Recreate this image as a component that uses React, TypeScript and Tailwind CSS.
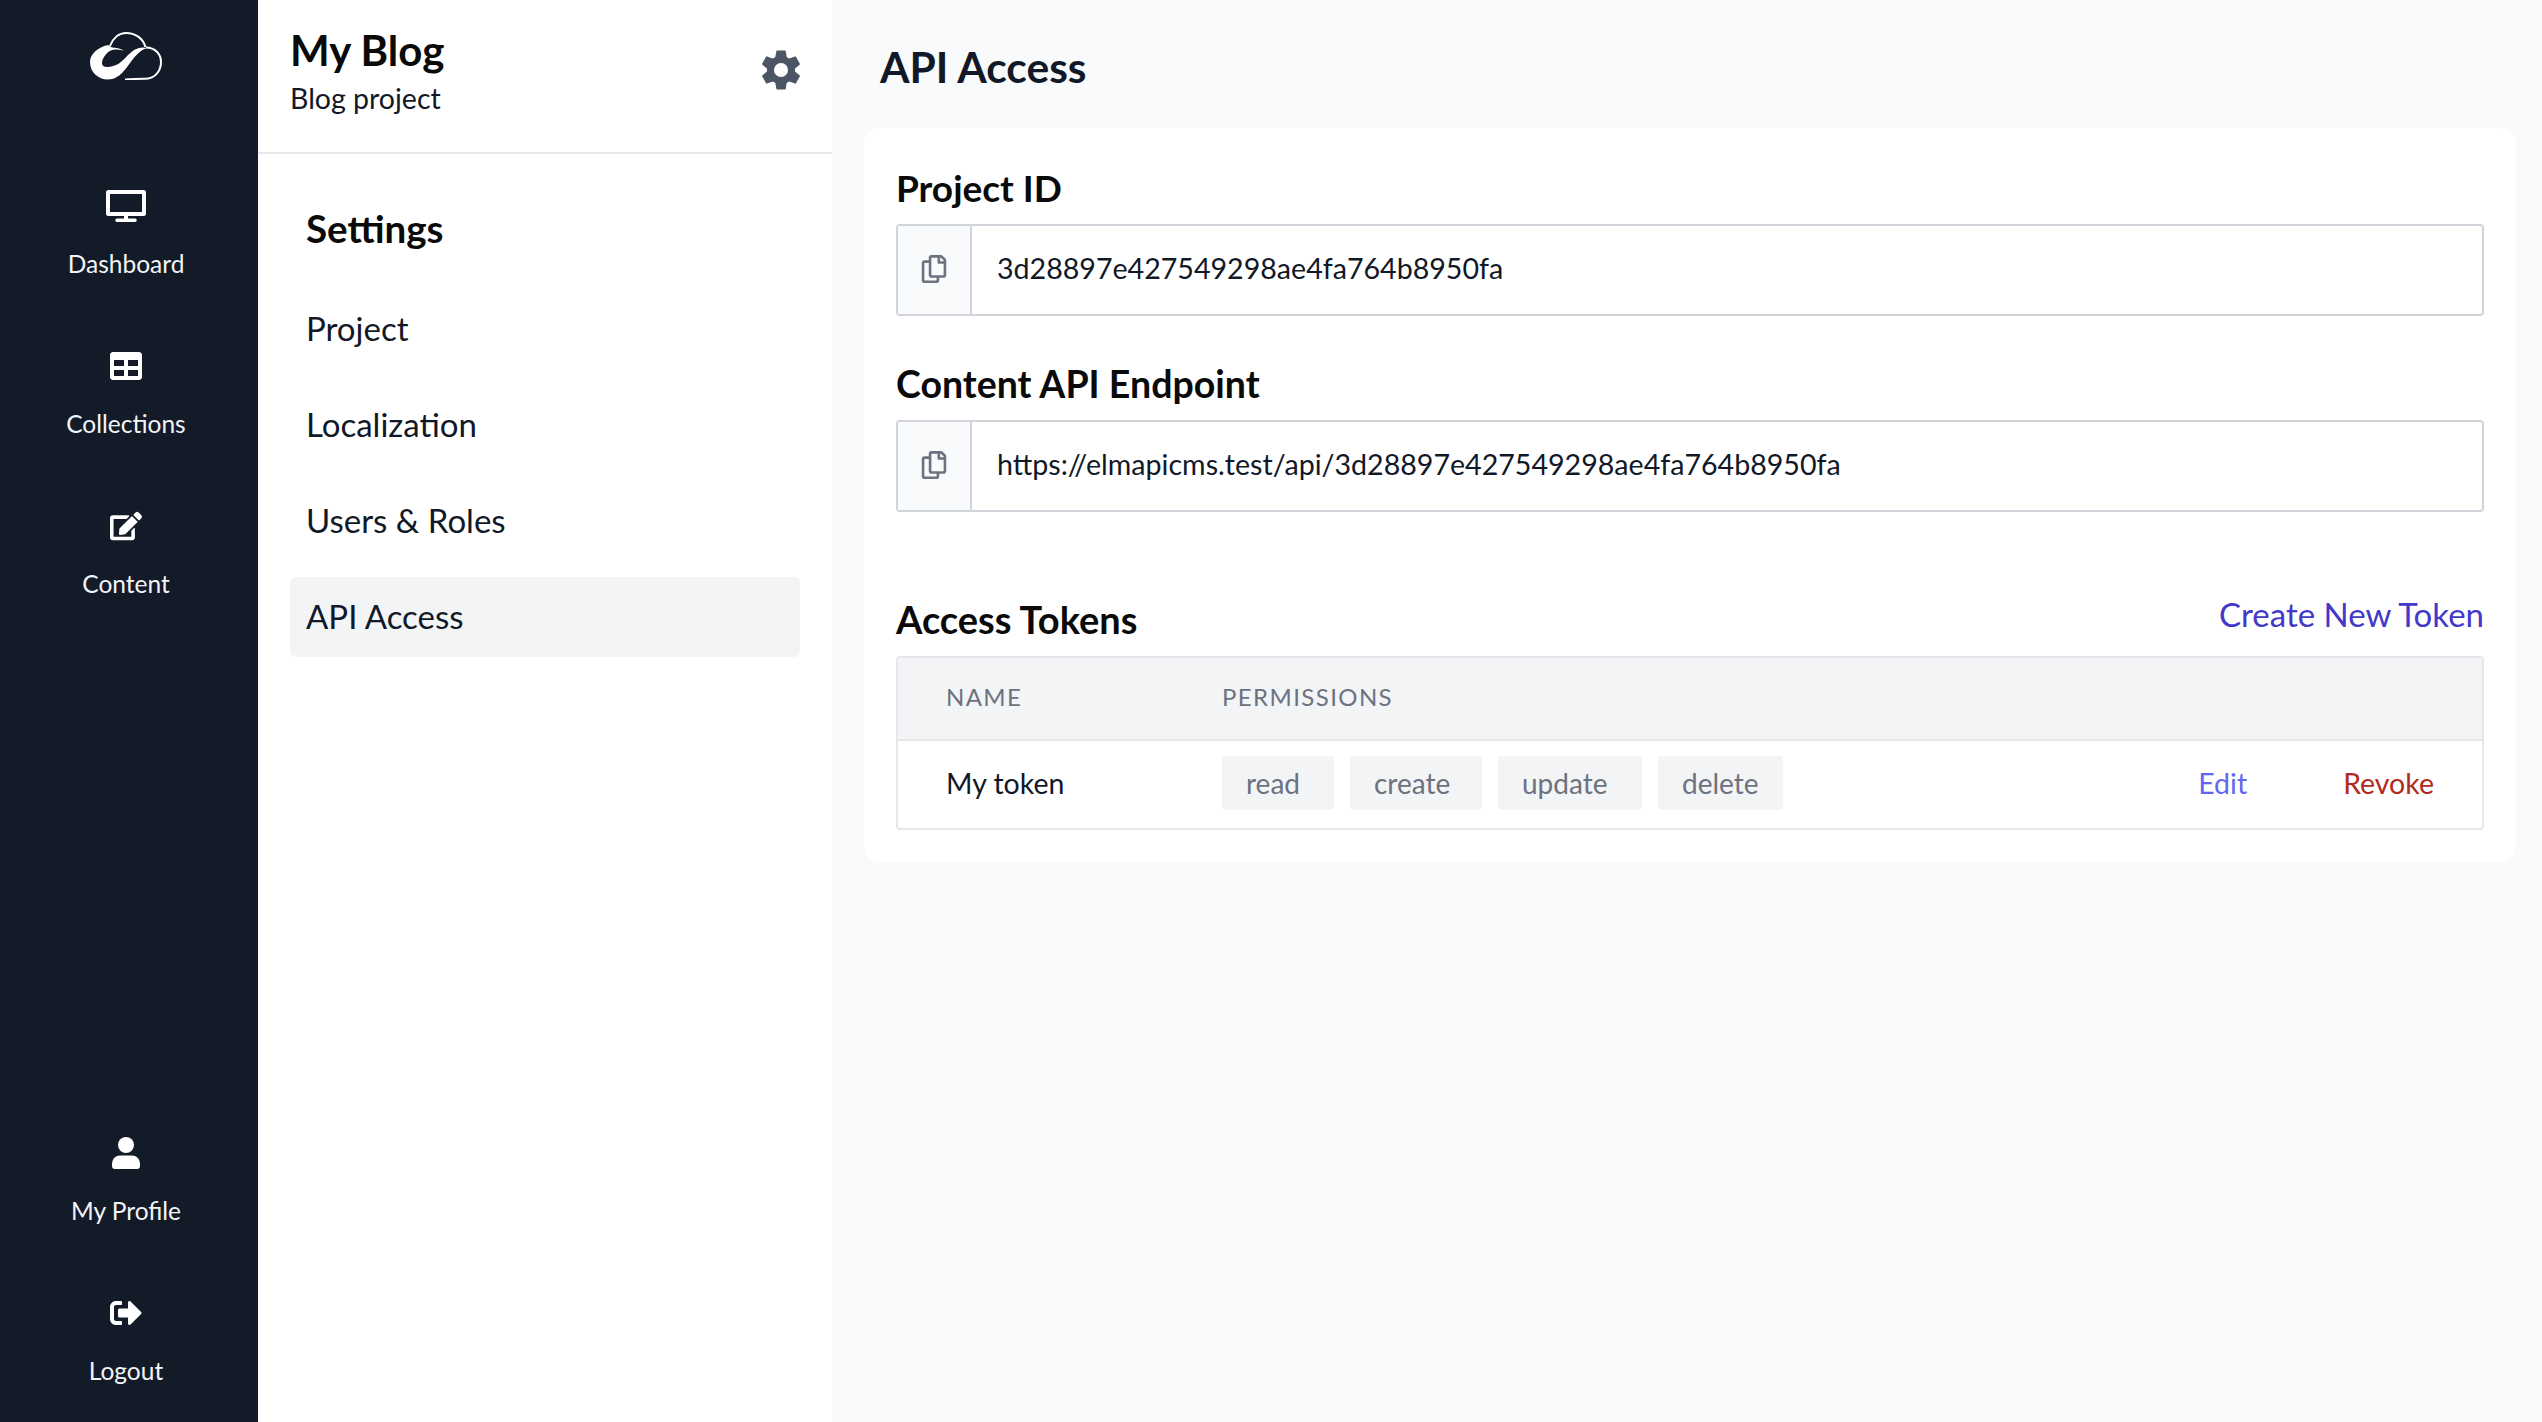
import React from "react";
import { FaTable, FaEdit, FaRegCopy, FaSignOutAlt } from "react-icons/fa";

const font = { fontFamily: '"Lato", "Noto Sans", sans-serif' };

function Logo() {
  return (
    <svg width="72" height="48" viewBox="0 0 72 48" fill="none">
      <path d="M18 13 C8 15 0 22 0 30 C0 40 8 47.500 18 47.500 C30 47.500 36 36 43 27 C48 21 52 17.500 57 16 C50 14 44 17 38 23 C32 30 26 35 17 35 C11 35 11 30 14 25 C17 20 21 17 27 17.500 L34 18.500 C30 16.500 26 15.500 22 15.500 Z" fill="#fff" />
      <path d="M20 14 C23 6 29 1 36 1 C45 1 53 6 55.500 15" stroke="#fff" strokeWidth="2" />
      <path d="M56 15.500 C65 15.500 71 22 71 30 C71 40 64 46.800 55 46.800 C48 46.800 41 47 35 47.500" stroke="#fff" strokeWidth="2" />
    </svg>
  );
}

function Desktop() {
  return (
    <svg width="40" height="32" viewBox="0 0 40 32" fill="#fff">
      <path fillRule="evenodd" d="M2.500 0h35A2.500 2.500 0 0 1 40 2.500v21a2.500 2.500 0 0 1-2.500 2.500h-35A2.500 2.500 0 0 1 0 23.500v-21A2.500 2.500 0 0 1 2.500 0zM4 4v18h32V4z" />
      <path d="M18 26h4v2.500h7a1.700 1.700 0 0 1 0 3.500H11a1.700 1.700 0 0 1 0-3.500h7z" />
    </svg>
  );
}

function User() {
  return (
    <svg width="28" height="32" viewBox="0 0 28 32" fill="#fff">
      <circle cx="14" cy="8" r="8" />
      <path d="M8 18.500h12a8 8 0 0 1 8 8V29a3 3 0 0 1-3 3H3a3 3 0 0 1-3-3v-2.500a8 8 0 0 1 8-8z" />
    </svg>
  );
}

function Gear() {
  const tooth = (
    <>
      <path d="M14.500 0.500h9l1.500 8h-12z" />
      <path d="M14.500 39.500h9l1.500-8h-12z" />
    </>
  );
  return (
    <svg width="38" height="40" viewBox="0 0 38 40" fill="#4b5563" className="mb-[6px]">
      <path
        fillRule="evenodd"
        d="M19 6a14 14 0 1 1 0 28a14 14 0 1 1 0-28zM19 13a7 7 0 1 0 0 14a7 7 0 1 0 0-14z"
      />
      {tooth}
      <g transform="rotate(60 19 20)">{tooth}</g>
      <g transform="rotate(120 19 20)">{tooth}</g>
    </svg>
  );
}

function NavItem({ icon, label }: { icon: React.ReactNode; label: string }) {
  return (
    <div className="h-[160px] flex flex-col items-center pt-[30px]">
      <div className="h-[32px] flex items-center justify-center">{icon}</div>
      <div className="mt-[24px] text-[24.500px] leading-[36px] text-[#f3f4f6]">{label}</div>
    </div>
  );
}

function CopyField({ value }: { value: string }) {
  return (
    <div className="h-[92px] flex border-2 border-[#d1d5db] rounded-[4px] overflow-hidden">
      <div className="w-[74px] shrink-0 bg-[#f9fafb] border-r-2 border-[#d1d5db] flex items-center justify-center pb-[2px]">
        <FaRegCopy className="text-[#6b7280] text-[28px]" />
      </div>
      <div className="flex-1 flex items-center pl-[25px] pb-[3px] text-[28.600px] text-[#111827]">{value}</div>
    </div>
  );
}

function Tag({ children, className }: { children: string; className: string }) {
  return (
    <span className={`h-[54px] pl-[24px] rounded-[4px] bg-[#f3f4f6] text-[#6b7280] text-[28px] flex items-center ${className}`}>
      {children}
    </span>
  );
}

function SettingsLink({ label, active }: { label: string; active?: boolean }) {
  return (
    <div className={`h-[80px] px-[16px] rounded-[6px] flex items-center text-[33px] text-[#111827] ${active ? "bg-[#f3f4f6]" : ""}`}>
      {label}
    </div>
  );
}

export default function App() {
  return (
    <div style={font} className="w-[2542px] h-[1422px] flex overflow-hidden bg-[#f9fafb]">
      <aside className="w-[258px] shrink-0 bg-[#131a28] flex flex-col pr-[6px]">
        <div className="h-[128px] flex items-start justify-center pt-[32px]">
          <Logo />
        </div>
        <div className="mt-[32px]">
          <NavItem icon={<Desktop />} label="Dashboard" />
          <NavItem icon={<FaTable className="text-white text-[32px]" />} label="Collections" />
          <NavItem icon={<FaEdit className="text-white text-[32px]" />} label="Content" />
        </div>
        <div className="mt-auto h-[315px]">
          <NavItem icon={<User />} label="My Profile" />
          <NavItem icon={<FaSignOutAlt className="text-white text-[32px]" />} label="Logout" />
        </div>
      </aside>

      <section className="w-[574px] shrink-0 bg-white">
        <div className="h-[154px] border-b-2 border-[#e5e7eb] flex items-center justify-between pl-[32px] pr-[32px] pb-[6px]">
          <div>
            <div className="text-[42px] leading-[50px] font-bold text-[#0a0a0a]">My Blog</div>
            <div className="text-[28.500px] leading-[46px] text-[#111827]">Blog project</div>
          </div>
          <Gear />
        </div>
        <div className="px-[32px] pt-[35px]">
          <div className="h-[80px] px-[16px] flex items-center text-[38.500px] font-bold text-[#0a0a0a]">Settings</div>
          <div className="flex flex-col gap-[16px] mt-[20px]">
            <SettingsLink label="Project" />
            <SettingsLink label="Localization" />
            <SettingsLink label="Users &amp; Roles" />
            <SettingsLink label="API Access" active />
          </div>
        </div>
      </section>

      <main className="flex-1 pl-[32px] pr-[26px]">
        <div className="h-[128px] flex items-center pl-[16px] pt-[6px] text-[42.500px] font-bold text-[#111827]">API Access</div>
        <div className="h-[734px] bg-white rounded-[16px] px-[32px] pt-[32px]">
          <div className="h-[64px] text-[37px] font-bold leading-[56px] text-[#0a0a0a]">Project ID</div>
          <CopyField value="3d28897e427549298ae4fa764b8950fa" />
          <div className="mt-[40px] h-[64px] text-[37.500px] font-bold leading-[56px] text-[#0a0a0a]">Content API Endpoint</div>
          <CopyField value="https://elmapicms.test/api/3d28897e427549298ae4fa764b8950fa" />
          <div className="mt-[72px] h-[72px] flex items-start justify-between">
            <div className="text-[38px] font-bold leading-[50px] pt-[10px] text-[#0a0a0a]">Access Tokens</div>
            <div className="text-[33px] leading-[50px] pt-[5px] text-[#4338ca]">Create New Token</div>
          </div>
          <div className="h-[174px] border-2 border-[#e5e7eb] rounded-[4px] overflow-hidden">
            <div className="h-[83px] border-b-2 border-[#e5e7eb] bg-[#f3f4f6] flex items-center pb-[3px] text-[24px] tracking-[1.400px] text-[#6b7280]">
              <div className="w-[324px] pl-[48px]">NAME</div>
              <div>PERMISSIONS</div>
            </div>
            <div className="h-[87px] flex items-center pb-[3px]">
              <div className="w-[324px] pl-[48px] text-[28.500px] text-[#111827]">My token</div>
              <div className="flex gap-[16px]">
                <Tag className="w-[112px]">read</Tag>
                <Tag className="w-[132px]">create</Tag>
                <Tag className="w-[144px]">update</Tag>
                <Tag className="w-[125px]">delete</Tag>
              </div>
              <div className="ml-auto flex gap-[96px] pr-[48px] text-[28.500px]">
                <span className="text-[#6366f1]">Edit</span>
                <span className="text-[#b02a20]">Revoke</span>
              </div>
            </div>
          </div>
        </div>
      </main>
    </div>
  );
}
